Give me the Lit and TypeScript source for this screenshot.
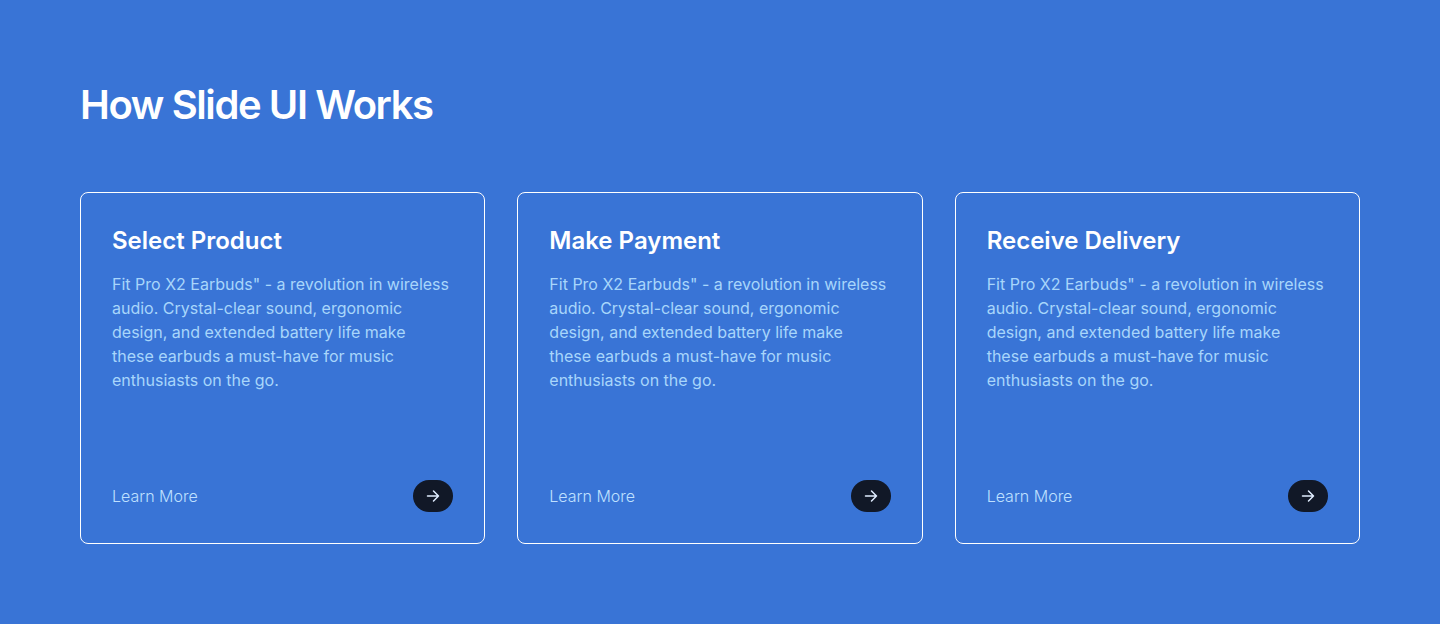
import { LitElement, html, css } from "lit";
import { customElement, property } from "lit/decorators.js";

const DESCRIPTION =
  'Fit Pro X2 Earbuds" - a revolution in wireless audio. Crystal-clear sound, ergonomic design, and extended battery life make these earbuds a must-have for music enthusiasts on the go.';

const STEPS = ["Select Product", "Make Payment", "Receive Delivery"];

@customElement("step-card")
export class StepCard extends LitElement {
  @property() heading = "";
  @property() text = "";

  static styles = css`
    :host {
      display: flex;
      flex-direction: column;
      justify-content: space-between;
      gap: 88px;
      box-sizing: border-box;
      padding: 31px;
      border: 1px solid #fff;
      border-radius: 8px;
    }
    .body {
      display: flex;
      flex-direction: column;
      gap: 14px;
    }
    .title {
      margin: 0;
      font-size: 24px;
      line-height: 34px;
      font-weight: 600;
      color: #fff;
    }
    .text {
      margin: 0;
      padding-right: 4px;
      font-weight: 400;
      color: #a8d6fb;
    }
    .footer {
      display: flex;
      align-items: center;
      justify-content: space-between;
    }
    .more {
      color: inherit;
      text-decoration: none;
    }
    .go {
      display: flex;
      align-items: center;
      justify-content: center;
      width: 40px;
      height: 32px;
      padding: 0;
      border: 0;
      border-radius: 16px;
      background: #111827;
      color: #e0edff;
      cursor: pointer;
    }
  `;

  render() {
    return html`
      <div class="body">
        <h3 class="title">${this.heading}</h3>
        <p class="text">${this.text}</p>
      </div>
      <div class="footer">
        <a class="more" href="#">Learn More</a>
        <button class="go" type="button" aria-label="Open ${this.heading}">
          <svg width="16" height="16" viewBox="0 0 16 16" fill="none" stroke="currentColor"
            stroke-width="1.5" stroke-linecap="round" stroke-linejoin="round" aria-hidden="true">
            <path d="M2.5 8h11M8.5 3 13.5 8 8.5 13" />
          </svg>
        </button>
      </div>
    `;
  }
}

@customElement("app-root")
export class AppRoot extends LitElement {
  static styles = css`
    :host {
      display: block;
      box-sizing: border-box;
      min-height: 100vh;
      padding: 80px;
      background: #3974d6;
      color: #bfe0ff;
      font-family: Inter, sans-serif;
      font-size: 16px;
      line-height: 24px;
      font-weight: 300;
    }
    .heading {
      margin: 0 0 62px;
      font-size: 40px;
      line-height: 50px;
      font-weight: 600;
      letter-spacing: -0.035em;
      color: #fff;
    }
    .steps {
      display: grid;
      grid-template-columns: repeat(auto-fit, minmax(320px, 1fr));
      gap: 32px;
    }
  `;

  render() {
    return html`
      <h2 class="heading">How Slide UI Works</h2>
      <div class="steps">
        ${STEPS.map((s) => html`<step-card .heading=${s} .text=${DESCRIPTION}></step-card>`)}
      </div>
    `;
  }
}
